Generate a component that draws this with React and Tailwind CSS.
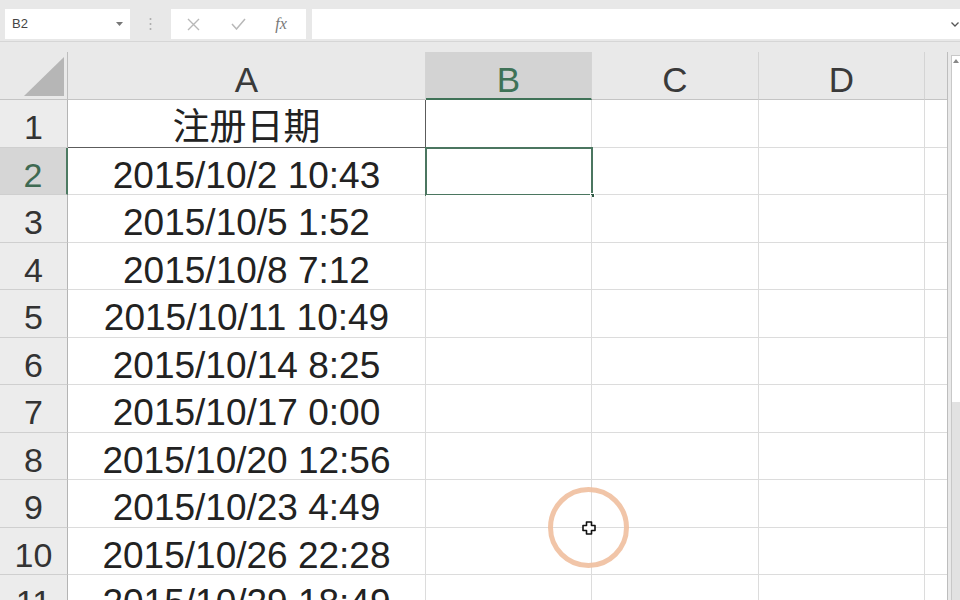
const rows = [
  "注册日期",
  "2015/10/2 10:43",
  "2015/10/5 1:52",
  "2015/10/8 7:12",
  "2015/10/11 10:49",
  "2015/10/14 8:25",
  "2015/10/17 0:00",
  "2015/10/20 12:56",
  "2015/10/23 4:49",
  "2015/10/26 22:28",
  "2015/10/29 18:49",
];

function Toolbar() {
  return (
    <div className="h-[42px] flex items-start pt-[9px] border-b border-[#d6d6d6] bg-[#e8e8e8]">
      <div className="ml-[5px] w-[125px] h-[30px] bg-white flex items-center justify-between pl-[7px] pr-[7px]">
        <span className="text-[13px] text-[#444] font-['Liberation_Sans',sans-serif]">B2</span>
        <svg width="7" height="4" viewBox="0 0 7 4"><path d="M0 0 L7 0 L3.5 4 Z" fill="#777" /></svg>
      </div>
      <div className="w-[41px] h-[30px] flex items-center justify-center">
        <svg width="3" height="14" viewBox="0 0 3 14">
          <circle cx="1.5" cy="2" r="1" fill="#aaa" />
          <circle cx="1.5" cy="7" r="1" fill="#aaa" />
          <circle cx="1.5" cy="12" r="1" fill="#aaa" />
        </svg>
      </div>
      <div className="w-[135px] h-[30px] bg-white flex items-center">
        <div className="w-[29px] flex justify-end">
          <svg width="13" height="13" viewBox="0 0 13 13">
            <path d="M1 1 L12 12 M12 1 L1 12" stroke="#b8b8b8" strokeWidth="1.4" />
          </svg>
        </div>
        <div className="w-[46px] flex justify-end">
          <svg width="15" height="12" viewBox="0 0 15 12">
            <path d="M1 6 L5.5 11 L14 1" stroke="#b8b8b8" strokeWidth="1.5" fill="none" />
          </svg>
        </div>
        <div className="flex-1 flex justify-center pl-[10px]">
          <span className="text-[16px] italic text-[#777] font-['Liberation_Serif',serif]">fx</span>
        </div>
      </div>
      <div className="ml-[6px] flex-1 h-[30px] bg-white flex items-center justify-end pr-[1px]">
        <svg width="8" height="5" viewBox="0 0 8 5"><path d="M0.5 0.5 L4 4 L7.5 0.5" stroke="#555" strokeWidth="1.3" fill="none" /></svg>
      </div>
    </div>
  );
}

function ColHeader({ label, w, active }) {
  return (
    <div
      className={
        active
          ? "h-full flex items-center justify-center border-r border-[#d4d4d4] border-b-2 border-b-[#3f7257] bg-[#d3d3d3] text-[#3f7257]"
          : "h-full flex items-center justify-center border-r border-[#d4d4d4] border-b border-b-[#c4c4c4] bg-[#e9e9e9] text-[#3a3a3a]"
      }
      style={{ width: w }}
    >
      <span className="text-[35px] leading-none pt-[8px]">{label}</span>
    </div>
  );
}

export default function App() {
  return (
    <div className="relative w-[960px] h-[600px] overflow-hidden bg-[#e9e9e9] font-['Liberation_Sans',sans-serif]">
      <Toolbar />
      <div className="h-[10px]" />
      <div className="flex">
        <div className="w-[948px] border-r border-[#bdbdbd]">
          <div className="h-[48px] flex">
            <div className="w-[68px] h-full flex items-end justify-end pr-[3px] pb-[3px] border-r border-[#bdbdbd] border-b border-b-[#c4c4c4]">
              <svg width="40" height="39" viewBox="0 0 40 39"><path d="M40 0 L40 39 L0 39 Z" fill="#b6b6b6" /></svg>
            </div>
            <ColHeader label="A" w={358} />
            <ColHeader label="B" w={166} active />
            <ColHeader label="C" w={167} />
            <ColHeader label="D" w={166} />
            <div className="flex-1 h-full border-b border-[#c4c4c4]" />
          </div>
          {rows.map((text, i) => {
            const n = i + 1;
            const sel = n === 2;
            return (
              <div key={n} className="h-[47.5px] flex">
                <div
                  className={
                    sel
                      ? "w-[68px] h-full flex items-center justify-center bg-[#d6d6d6] border-r-2 border-r-[#4d7a62] border-b border-b-[#cfcfcf] text-[#3f6a52]"
                      : "w-[68px] h-full flex items-center justify-center bg-[#ececec] border-r border-r-[#b4b4b4] border-b border-b-[#cfcfcf] text-[#333]"
                  }
                >
                  <span className="text-[34px] leading-none pt-[8px]">{n}</span>
                </div>
                <div
                  className={
                    n === 1
                      ? "w-[358px] h-full flex items-center justify-center bg-white border-r border-r-[#5c5c5c] border-b border-b-[#5c5c5c] text-[#222]"
                      : "w-[358px] h-full flex items-center justify-center bg-white border-r border-r-[#dcdcdc] border-b border-b-[#dcdcdc] text-[#222]"
                  }
                >
                  <span className="text-[37px] leading-none pt-[9px] whitespace-nowrap font-['Liberation_Sans','Noto_Sans_CJK_SC',sans-serif]">
                    {text}
                  </span>
                </div>
                <div className="relative w-[166px] h-full bg-white border-r border-r-[#dcdcdc] border-b border-b-[#dcdcdc]">
                  {sel && (
                    <div className="absolute left-[-1px] top-[-1px] w-[168px] h-[49px] border-2 border-[#4b7660]">
                      <div className="absolute right-[-4px] bottom-[-4px] w-[5px] h-[5px] bg-[#2f5a44] border border-white" />
                    </div>
                  )}
                </div>
                <div className="w-[167px] h-full bg-white border-r border-r-[#dcdcdc] border-b border-b-[#dcdcdc]" />
                <div className="w-[166px] h-full bg-white border-r border-r-[#dcdcdc] border-b border-b-[#dcdcdc]" />
                <div className="flex-1 h-full bg-white border-b border-b-[#dcdcdc]" />
              </div>
            );
          })}
        </div>
        <div className="flex-1 flex flex-col pt-[3px] pl-[3px]">
          <div className="h-[347px] bg-white border-l border-t border-[#c8c8c8] flex justify-center pt-[3px]">
            <svg width="6" height="4" viewBox="0 0 6 4"><path d="M0 4 L3 0 L6 4 Z" fill="#888" /></svg>
          </div>
          <div className="flex-1 bg-[#e2e2e2] border-l border-[#c8c8c8]" />
        </div>
      </div>

      <div className="absolute left-[548px] top-[487px] w-[81px] h-[81px] rounded-full border-[5px] border-[#f0bf9e] opacity-90" />
      <svg className="absolute left-[582px] top-[521px]" width="14" height="14" viewBox="0 0 14 14">
        <path
          d="M4.5 1 H9.5 V4.5 H13 V9.5 H9.5 V13 H4.5 V9.5 H1 V4.5 H4.5 Z"
          fill="#fff"
          stroke="#111"
          strokeWidth="1.6"
          strokeLinejoin="round"
        />
      </svg>
    </div>
  );
}
